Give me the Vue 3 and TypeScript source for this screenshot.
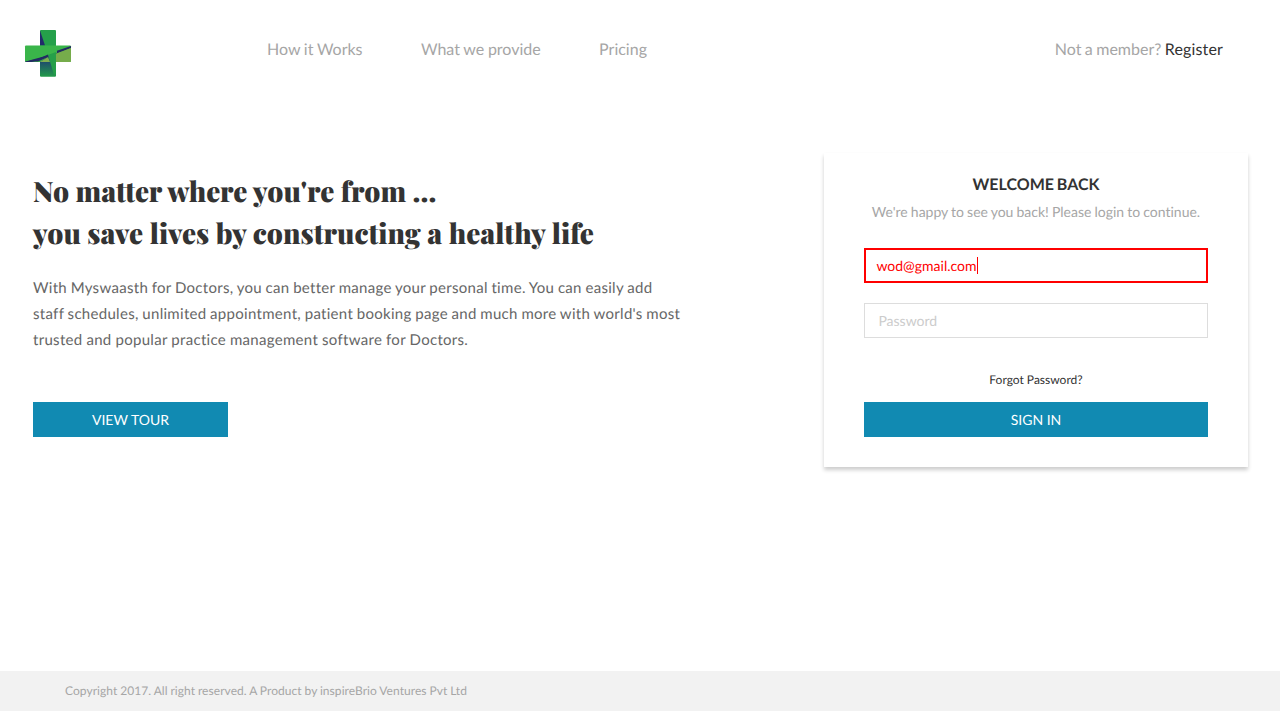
<script setup lang="ts">
import { ref } from 'vue'

const navLinks: string[] = ['How it Works', 'What we provide', 'Pricing']
const email = ref<string>('wod@gmail.com')
const password = ref<string>('')
</script>

<template>
  <div class="page">
    <header class="header">
      <svg class="logo" width="48" height="48" viewBox="0 0 48 48" aria-label="Myswaasth">
        <defs>
          <linearGradient id="stem" x1="0" y1="0" x2="0" y2="1">
            <stop offset="0" stop-color="#1f4068" />
            <stop offset="0.300" stop-color="#1f4f6b" />
            <stop offset="1" stop-color="#239a4a" />
          </linearGradient>
        </defs>
        <rect x="16" y="1" width="16" height="46.500" rx="1" fill="#25a04a" />
        <path d="M16 1.500L21 16.500H16Z" fill="#222b6b" />
        <rect x="1" y="16.500" width="46" height="16.500" rx="1" fill="#3ab54a" />
        <path d="M1 32.500L47 17V19L32 25L8 33H1Z" fill="#222b62" />
        <path d="M1 31.500L33 20V24L1 32.500Z" fill="#3ab54a" />
        <path d="M16 33L25 27L32 46.500Q32 47.500 31 47.500H17Q16 47.500 16 46.500Z" fill="url(#stem)" />
        <path d="M16 33L24 28L26 33Z" fill="#7fae50" />
        <path d="M47 19V32Q47 33 46 33H31V25Z" fill="#76ac4b" />
        <path d="M8 32.500L24 25.500L25 27.500L14 32.500Z" fill="#222b62" />
        <path d="M24 26L32 23V44L30 46Z" fill="#259f49" />
      </svg>
      <nav class="nav">
        <a v-for="link in navLinks" :key="link">{{ link }}</a>
      </nav>
      <p class="member">Not a member? <a>Register</a></p>
    </header>

    <main class="main">
      <section class="intro">
        <h1>No matter where you're from ...<br />you save lives by constructing a healthy life</h1>
        <p class="lead">
          With Myswaasth for Doctors, you can better manage your personal time. You can easily add<br />
          staff schedules, unlimited appointment, patient booking page and much more with world's most<br />
          <span class="closing">trusted and popular practice management software for Doctors.</span>
        </p>
        <button class="button tour" type="button">VIEW TOUR</button>
      </section>

      <form class="card" @submit.prevent>
        <h2>WELCOME BACK</h2>
        <p class="welcome">We're happy to see you back! Please login to continue.</p>
        <div class="field email">{{ email }}<span class="caret"></span></div>
        <input v-model="password" class="field password" type="password" placeholder="Password" />
        <a class="forgot">Forgot Password?</a>
        <button class="button" type="submit">SIGN IN</button>
      </form>
    </main>

    <footer class="footer">Copyright 2017. All right reserved. A Product by inspireBrio Ventures Pvt Ltd</footer>
  </div>
</template>

<style>
body {
  margin: 0;
  background: #fff;
}
</style>

<style scoped>
.page {
  display: flex;
  flex-direction: column;
  height: 711px;
  overflow: hidden;
  font-family: Lato, sans-serif;
  color: #333;
  text-rendering: geometricPrecision;
}
.page * {
  box-sizing: border-box;
  text-rendering: geometricPrecision;
}
.header {
  display: flex;
  align-items: flex-start;
  height: 153px;
  padding: 29px 57px 0 24px;
}
.logo {
  flex: none;
}
.nav {
  display: flex;
  gap: 58.4px;
  margin-left: 195px;
  padding-top: 9px;
  font-size: 16px;
  line-height: 24px;
  word-spacing: -0.4px;
  color: #a6a6a6;
}
.member {
  margin: 9px 0 0 auto;
  font-size: 16px;
  line-height: 24px;
  word-spacing: -0.7px;
  color: #a6a6a6;
}
.member a {
  letter-spacing: 0.15px;
  color: #333;
}
.main {
  display: flex;
  flex: 1;
  align-items: flex-start;
  justify-content: space-between;
  padding: 0 32px 0 33px;
}
.intro {
  padding-top: 18px;
}
h1 {
  margin: 0;
  font-family: 'Playfair Display', 'Liberation Serif', serif;
  font-size: 28px;
  font-weight: 900;
  line-height: 42px;
  word-spacing: 0.3px;
  white-space: nowrap;
}
.lead {
  margin: 20px 0 0;
  font-size: 15px;
  line-height: 26px;
  letter-spacing: 0.3px;
  word-spacing: -0.5px;
  color: #666;
  white-space: nowrap;
}
.closing {
  word-spacing: -0.2px;
}
.button {
  display: block;
  width: 100%;
  height: 35px;
  padding: 0;
  border: 0;
  background: #118ab2;
  font: 14px/35px Lato, sans-serif;
  color: #fff;
}
.tour {
  width: 195px;
  margin-top: 49px;
}
.card {
  width: 424px;
  height: 314px;
  padding: 20px 40px 0;
  background: #fff;
  box-shadow: 0 3px 4px rgba(0, 0, 0, 0.2);
  text-align: center;
}
h2 {
  margin: 0;
  font-size: 16px;
  font-weight: 700;
  line-height: 24px;
  word-spacing: -1px;
}
.welcome {
  margin: 4px 0 26px;
  font-size: 14px;
  line-height: 21px;
  word-spacing: -0.5px;
  font-variant-ligatures: none;
  color: #a6a6a6;
  white-space: nowrap;
}
.field {
  display: flex;
  align-items: center;
  width: 100%;
  height: 35px;
  border: 1px solid #ddd;
  border-radius: 0;
  outline: 0;
  background: #fff;
  font: 14px/20px Lato, sans-serif;
  text-align: left;
}
.email {
  padding: 0 10.4px;
  border: 2px solid #f00;
  color: #f00;
}
.caret {
  width: 1px;
  height: 17px;
  background: #f00;
}
.password {
  margin-top: 20px;
  padding: 0 13.4px;
}
.password::placeholder {
  color: #ccc;
  opacity: 1;
}
.forgot {
  display: block;
  margin: 33px 0 13px;
  font-size: 12px;
  line-height: 18px;
}
.footer {
  flex: none;
  height: 40px;
  padding-left: 65px;
  background: #f2f2f2;
  font-size: 12px;
  line-height: 40px;
  letter-spacing: 0.06px;
  word-spacing: -0.3px;
  color: #a6a6a6;
}
</style>
